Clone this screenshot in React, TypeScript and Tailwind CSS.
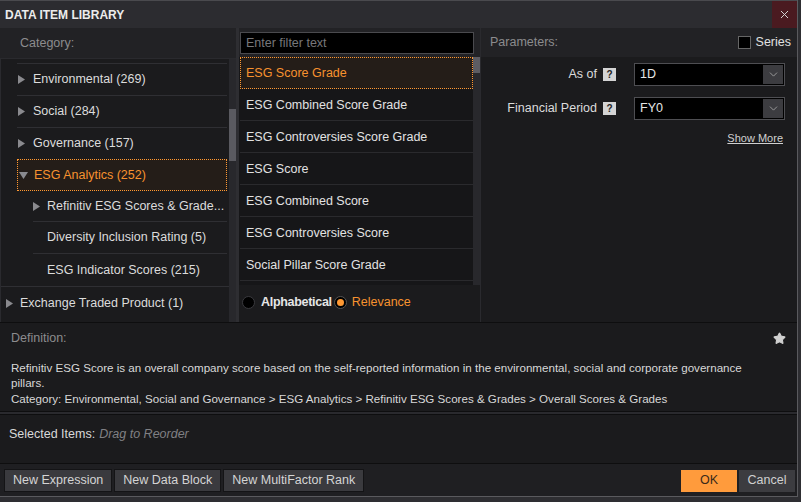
import { ChevronDown, X, Star } from "lucide-react";

const font = { fontFamily: '"Liberation Sans", Arial, sans-serif' };

function RightArrow() {
  return (
    <svg width="7" height="9" viewBox="0 0 7 9" className="shrink-0">
      <polygon points="0,0 7,4.5 0,9" fill="#8a8a8e" />
    </svg>
  );
}

function DownArrow() {
  return (
    <svg width="9" height="7" viewBox="0 0 9 7" className="shrink-0">
      <polygon points="0,0 9,0 4.5,7" fill="#8a8a8e" />
    </svg>
  );
}

function HelpBox() {
  return (
    <span className="flex h-[13px] w-[13px] items-center justify-center bg-[#d4d4d4] text-[10px] font-bold leading-none text-[#222]">
      ?
    </span>
  );
}

const items = [
  "ESG Score Grade",
  "ESG Combined Score Grade",
  "ESG Controversies Score Grade",
  "ESG Score",
  "ESG Combined Score",
  "ESG Controversies Score",
  "Social Pillar Score Grade",
];

export default function App() {
  return (
    <div
      className="h-[502px] w-[801px] overflow-hidden bg-[#2e2e32] text-[12.5px]"
      style={font}
    >
      <div className="flex h-[497px] w-[798px] flex-col border-r border-b border-[#5a5a5e] bg-[#1b1b1d]">
        {/* title bar */}
        <div className="flex h-[28px] shrink-0 items-center justify-between border-t border-[#4a4a4e] bg-[#2c2c30]">
          <span className="pl-[5px] text-[12px] font-bold text-[#ececec]">
            DATA ITEM LIBRARY
          </span>
          <button className="flex h-[27px] w-[25px] items-center justify-center bg-[#4a1a20] text-[#d8d8d8]">
            <X className="h-[13px] w-[13px]" strokeWidth={1.8} />
          </button>
        </div>

        {/* main */}
        <div className="flex h-[294px] shrink-0">
          {/* category */}
          <div className="flex w-[236px] flex-col">
            <div className="flex h-[30px] items-center bg-[#222225] pl-[20px] text-[#8c8c8e]">
              Category:
            </div>
            <div className="flex flex-1 border-t border-l border-[#2a2a2e] bg-[#1b1b1d]">
              <div className="flex-1 pt-[4px]">
                <div className="ml-[16px] mr-[2px] border-t border-[#2f2f33]" />
                {["Environmental (269)", "Social (284)", "Governance (157)"].map((t) => (
                  <div
                    key={t}
                    className="ml-[16px] mr-[2px] flex h-[32px] items-center gap-[8px] border-b border-[#2f2f33] pl-[1px] text-[#dcdcdc]"
                  >
                    <RightArrow />
                    <span>{t}</span>
                  </div>
                ))}
                <div className="ml-[16px] mr-[2px] -mt-px flex h-[32px] items-center gap-[6px] border border-dotted border-[#ff9933] bg-[#241d18] pl-[1px] text-[#f7922f]">
                  <DownArrow />
                  <span>ESG Analytics (252)</span>
                </div>
                <div className="ml-[32px] mr-[2px] flex h-[31px] items-center gap-[7px] border-b border-[#2f2f33] text-[#dcdcdc]">
                  <RightArrow />
                  <span>Refinitiv ESG Scores &amp; Grade...</span>
                </div>
                <div className="ml-[32px] mr-[2px] flex h-[32px] items-center border-b border-[#2f2f33] pl-[14px] text-[#dcdcdc]">
                  Diversity Inclusion Rating (5)
                </div>
                <div className="ml-[32px] mr-[2px] flex h-[32px] items-center pl-[14px] text-[#dcdcdc]">
                  ESG Indicator Scores (215)
                </div>
                <div className="flex h-[34px] items-center gap-[7px] border-t border-[#2f2f33] pl-[5px] text-[#dcdcdc]">
                  <RightArrow />
                  <span>Exchange Traded Product (1)</span>
                </div>
              </div>
              <div className="w-[7px] bg-[#28282c] pt-[50px]">
                <div className="h-[52px] w-[7px] bg-[#5a5a60]" />
              </div>
            </div>
          </div>

          {/* divider */}
          <div className="w-[3px] bg-[#2e2e32]" />

          {/* items */}
          <div className="flex w-[241px] flex-col bg-[#1b1b1d]">
            <div className="flex h-[29px] items-center bg-[#222225] pl-[1px] pr-[6px]">
              <input
                className="h-[22px] w-full border border-[#4a4a4e] bg-black px-[5px] text-[12.5px] text-[#ddd] placeholder:text-[#77777a] focus:outline-none"
                placeholder="Enter filter text"
              />
            </div>
            <div className="flex h-[228px]">
              <div className="flex-1 bg-[#161618] pl-[1px]">
                {items.map((t, i) =>
                  i === 0 ? (
                    <div
                      key={t}
                      className="flex h-[32px] items-center border border-dotted border-[#ff9933] bg-[#241d18] pl-[5px] text-[#f7922f]"
                    >
                      {t}
                    </div>
                  ) : (
                    <div
                      key={t}
                      className="flex h-[32px] items-center border-b border-[#2a2a2d] pl-[6px] pt-[2px] text-[#e2e2e2]"
                    >
                      {t}
                    </div>
                  )
                )}
              </div>
              <div className="w-[7px] bg-[#28282c]">
                <div className="h-[16px] w-[7px] bg-[#5c5c62]" />
              </div>
            </div>
            <div className="flex flex-1 items-center pl-[3px] pb-[2px]">
              <span className="h-[13px] w-[13px] rounded-full border border-[#3a3a3e] bg-black" />
              <span className="ml-[6px] font-bold tracking-[-0.3px] text-[#e6e6e6]">Alphabetical</span>
              <span className="ml-[2px] flex h-[13px] w-[13px] items-center justify-center rounded-full border border-[#555] bg-black">
                <span className="h-[7px] w-[7px] rounded-full bg-[#ff9933]" />
              </span>
              <span className="ml-[5px] text-[#f7922f]">Relevance</span>
            </div>
          </div>

          {/* parameters */}
          <div className="flex flex-1 flex-col border-l border-[#2a2a2e]">
            <div className="flex h-[29px] items-center justify-between bg-[#222225] pl-[9px] pr-[6px]">
              <span className="text-[#8c8c8e]">Parameters:</span>
              <span className="flex items-center gap-[5px] text-[#e0e0e0]">
                <span className="h-[13px] w-[13px] border border-[#666] bg-black" />
                Series
              </span>
            </div>
            <div className="flex flex-col gap-[11px] pt-[6px] pr-[12px]">
              {[
                ["As of", "1D"],
                ["Financial Period", "FY0"],
              ].map(([label, val]) => (
                <div key={label} className="flex items-center justify-end">
                  <span className="text-[#dcdcdc]">{label}</span>
                  <span className="ml-[6px]">
                    <HelpBox />
                  </span>
                  <div className="ml-[18px] flex h-[23px] w-[151px] items-center justify-between border border-[#4e4e52] bg-black pl-[5px] pr-[1px] text-[#e6e6e6]">
                    <span>{val}</span>
                    <span className="flex h-[19px] w-[20px] items-center justify-center bg-[#3c3c40] text-[#aaa]">
                      <ChevronDown className="h-[13px] w-[13px]" strokeWidth={1.5} />
                    </span>
                  </div>
                </div>
              ))}
              <div className="-mt-[1px] flex justify-end pr-[2px]">
                <span className="text-[11px] text-[#d0d0d0] underline">Show More</span>
              </div>
            </div>
          </div>
        </div>

        {/* definition */}
        <div className="flex h-[90px] shrink-0 flex-col border-y border-[#0e0e0f] bg-[#1b1b1d] px-[11px]">
          <div className="flex items-center justify-between pt-[6px]">
            <span className="text-[#8c8c8e]">Definition:</span>
            <Star className="h-[13px] w-[13px] fill-[#d0d0d0] text-[#d0d0d0]" />
          </div>
          <p className="mt-[12px] max-w-[760px] text-[11.6px] leading-[15.5px] text-[#d8d8d8]">
            Refinitiv ESG Score is an overall company score based on the self-reported information in the environmental, social and corporate governance pillars.
            <br />
            Category: Environmental, Social and Governance &gt; ESG Analytics &gt; Refinitiv ESG Scores &amp; Grades &gt; Overall Scores &amp; Grades
          </p>
        </div>

        <div className="h-[2px] shrink-0 bg-[#2a2a2e]" />

        {/* selected items */}
        <div className="flex h-[50px] shrink-0 items-start border-y border-[#0e0e0f] bg-[#1b1b1d] pl-[9px] pt-[10px]">
          <span className="text-[#d8d8d8]">Selected Items:</span>
          <span className="ml-[4px] italic text-[#808084]">Drag to Reorder</span>
        </div>

        {/* buttons */}
        <div className="flex flex-1 items-center justify-between bg-[#1f1f22] pl-[4px] pr-[2px] pt-[1px]">
          <div className="flex gap-[2px]">
            {["New Expression", "New Data Block", "New MultiFactor Rank"].map((b) => (
              <button
                key={b}
                className="h-[23px] border border-[#141416] bg-[#3a3a3e] px-[8px] text-[12.5px] text-[#d4d4d4]"
              >
                {b}
              </button>
            ))}
          </div>
          <div className="flex gap-[2px]">
            <button className="h-[22px] w-[56px] bg-[#ff9b3c] text-[12.5px] text-[#3a2a1a]">
              OK
            </button>
            <button className="h-[22px] w-[56px] bg-[#3c3c40] text-[12.5px] text-[#d0d0d0]">
              Cancel
            </button>
          </div>
        </div>
      </div>
    </div>
  );
}
